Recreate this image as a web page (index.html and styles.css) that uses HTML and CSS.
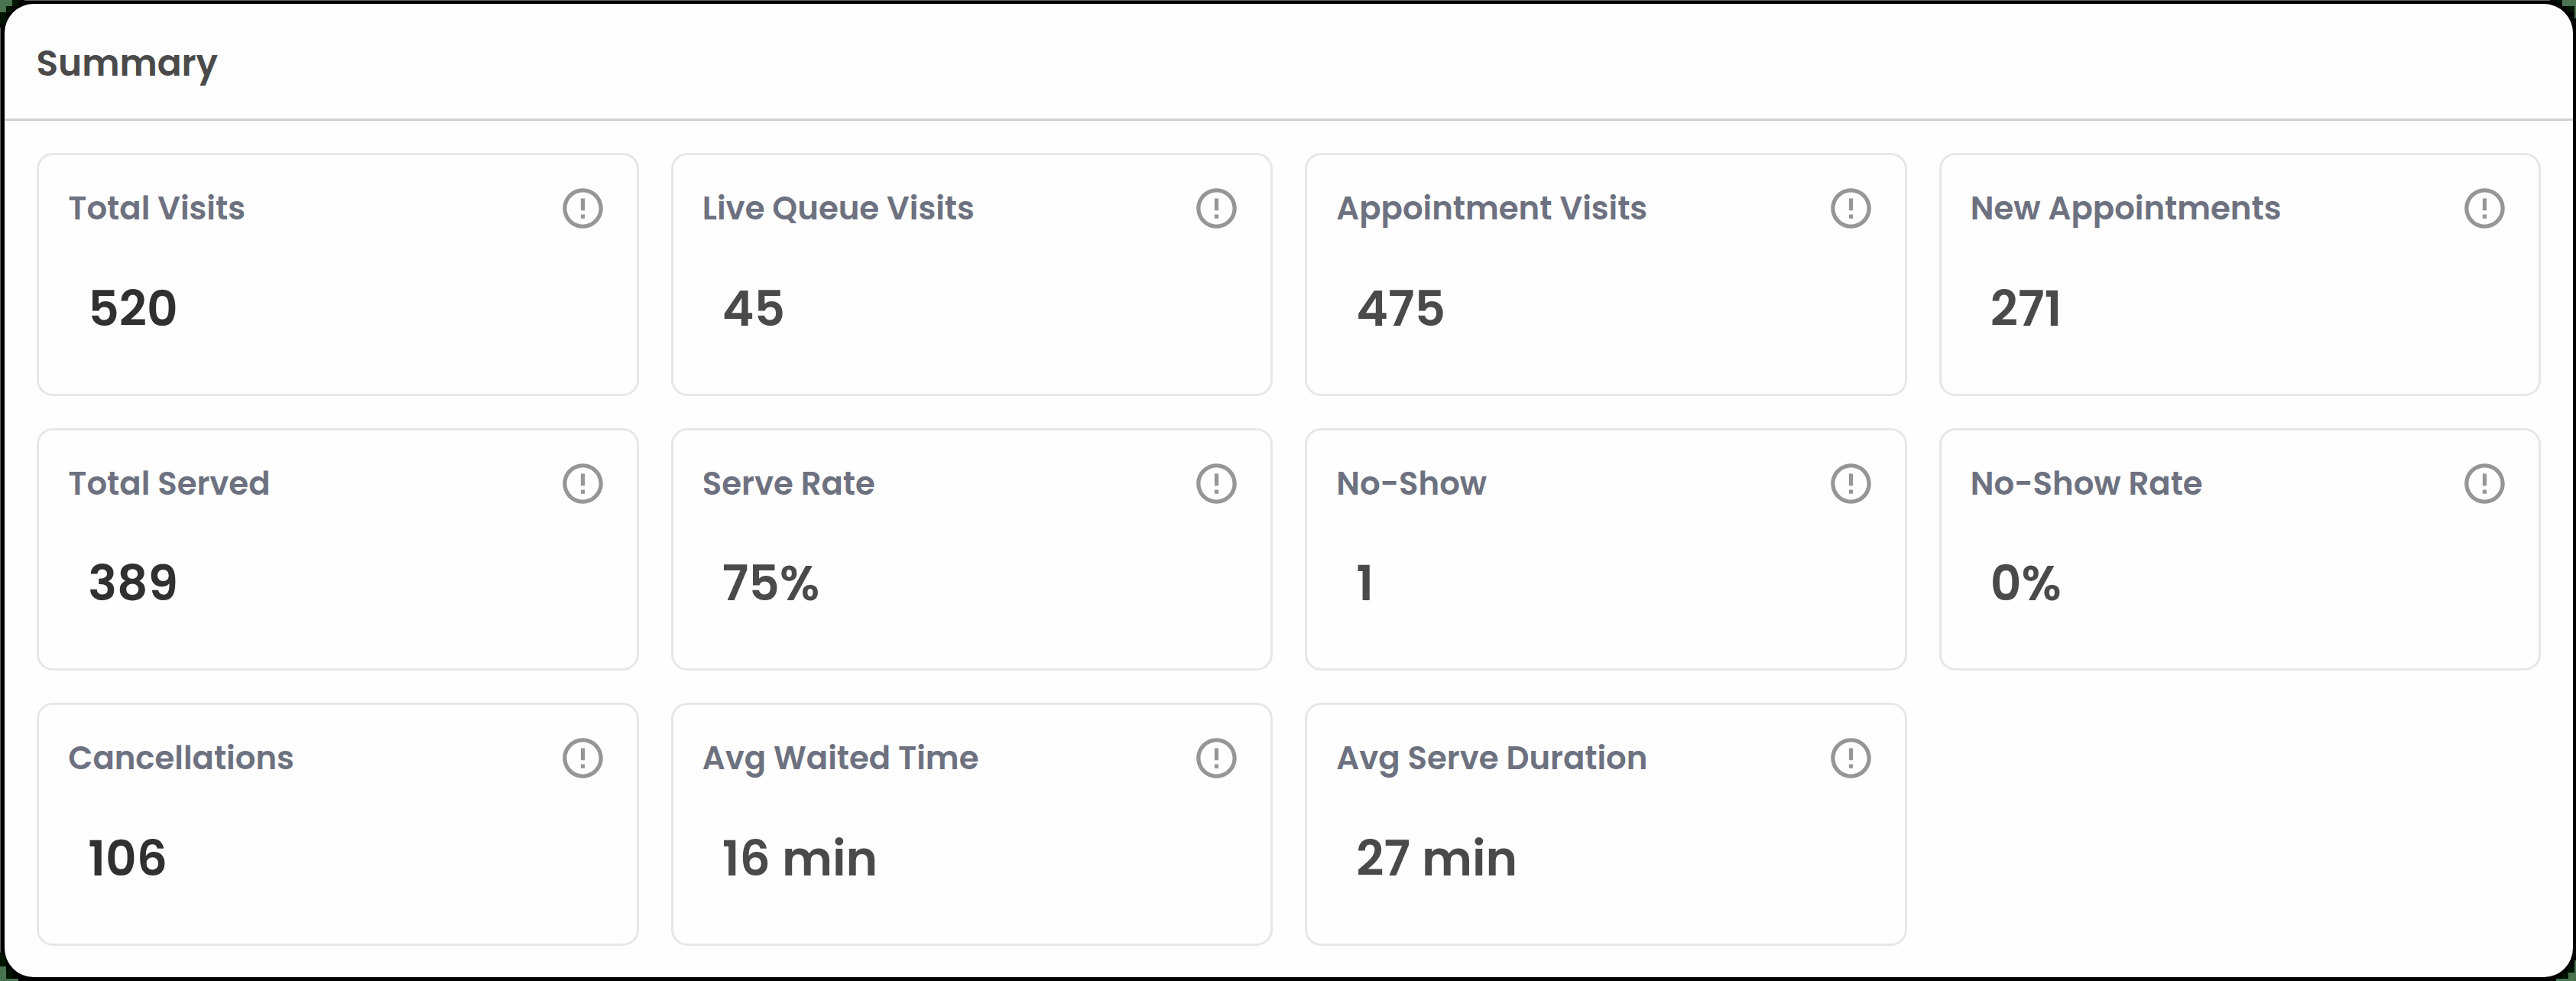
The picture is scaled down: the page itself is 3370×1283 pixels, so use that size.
FILE: index.html
```html
<!DOCTYPE html>
<html lang="en">
<head>
<meta charset="utf-8">
<title>Summary</title>
<link rel="stylesheet" href="styles.css">
</head>
<body>
<svg class="sprite" aria-hidden="true">
  <symbol id="info" viewBox="0 0 24 24"><path d="M11 15h2v2h-2zm0-8h2v6h-2zm.99-5C6.47 2 2 6.48 2 12s4.47 10 9.99 10C17.52 22 22 17.52 22 12S17.52 2 11.99 2zM12 20c-4.42 0-8-3.58-8-8s3.58-8 8-8 8 3.58 8 8-3.58 8-8 8z"/></symbol>
</svg>
<main class="panel">
  <header class="panel-header"><h1 class="heading">Summary</h1></header>
  <section class="grid">
    <article class="card primary"><div class="card-top"><h2 class="title">Total Visits</h2><svg class="icon"><use href="#info"/></svg></div><p class="value">520</p></article>
    <article class="card"><div class="card-top"><h2 class="title">Live Queue Visits</h2><svg class="icon"><use href="#info"/></svg></div><p class="value">45</p></article>
    <article class="card"><div class="card-top"><h2 class="title">Appointment Visits</h2><svg class="icon"><use href="#info"/></svg></div><p class="value">475</p></article>
    <article class="card"><div class="card-top"><h2 class="title">New Appointments</h2><svg class="icon"><use href="#info"/></svg></div><p class="value">271</p></article>
    <article class="card primary"><div class="card-top"><h2 class="title">Total Served</h2><svg class="icon"><use href="#info"/></svg></div><p class="value">389</p></article>
    <article class="card"><div class="card-top"><h2 class="title">Serve Rate</h2><svg class="icon"><use href="#info"/></svg></div><p class="value">75%</p></article>
    <article class="card"><div class="card-top"><h2 class="title">No-Show</h2><svg class="icon"><use href="#info"/></svg></div><p class="value">1</p></article>
    <article class="card"><div class="card-top"><h2 class="title">No-Show Rate</h2><svg class="icon"><use href="#info"/></svg></div><p class="value">0%</p></article>
    <article class="card primary"><div class="card-top"><h2 class="title">Cancellations</h2><svg class="icon"><use href="#info"/></svg></div><p class="value">106</p></article>
    <article class="card"><div class="card-top"><h2 class="title">Avg Waited Time</h2><svg class="icon"><use href="#info"/></svg></div><p class="value">16 min</p></article>
    <article class="card"><div class="card-top"><h2 class="title">Avg Serve Duration</h2><svg class="icon"><use href="#info"/></svg></div><p class="value">27 min</p></article>
  </section>
</main>
</body>
</html>
```
FILE: styles.css
```css
* { box-sizing: border-box; margin: 0; }

/* Black frame with green corner blocks and thin grey outer edges */
body {
  --green: linear-gradient(#4a7350, #4a7350);
  --dark: linear-gradient(#001500, #001500);
  --edge: linear-gradient(#606060, #606060);
  width: 3370px;
  height: 1283px;
  padding: 5px 4px 5px 6px;
  overflow: hidden;
  font-family: Poppins, Inter, sans-serif;
  font-weight: 600;
  background:
    var(--green) 0 0 / 16px 8px,
    var(--green) 0 8px / 8px 8px,
    var(--dark) 0 0 / 24px 8px,
    var(--dark) 0 0 / 8px 32px,
    var(--dark) 8px 8px / 6px 8px,
    var(--green) 3352px 0 / 18px 8px,
    var(--green) 3368px 8px / 2px 16px,
    var(--dark) 3344px 0 / 8px 3px,
    var(--dark) 3358px 8px / 10px 8px,
    var(--green) 0 1264px / 8px 16px,
    var(--green) 0 1280px / 24px 3px,
    var(--dark) 0 1248px / 8px 16px,
    var(--dark) 8px 1268px / 8px 12px,
    var(--green) 3344px 1280px / 26px 3px,
    var(--green) 3360px 1272px / 10px 8px,
    var(--green) 3368px 1256px / 2px 16px,
    var(--dark) 3352px 1272px / 8px 8px,
    var(--dark) 3360px 1264px / 8px 8px,
    var(--edge) 32px 0 / 3304px 1px,
    var(--edge) 0 36px / 1px 1210px,
    #000;
  background-repeat: no-repeat;
}

.sprite { display: none; }

.panel {
  height: 1273px;
  border-radius: 38px;
  background: #fefefe;
  overflow: hidden;
}

.panel-header {
  height: 153px;
  padding: 6px 41.5px 0;
  display: flex;
  align-items: center;
  border-bottom: 3px solid #d0d0d0;
}

.heading {
  font-size: 47px;
  font-weight: 600;
  line-height: 70px;
  color: #4a4a4a;
}

.grid {
  display: grid;
  grid-template-columns: repeat(4, 1fr);
  grid-auto-rows: 317.6px;
  gap: 42px;
  padding: 42px 42px 0;
}

.card {
  padding: 38px 38.6px 0 38.3px;
  border: 3px solid #e7e7e7;
  border-radius: 21px;
}

.card-top {
  display: flex;
  justify-content: space-between;
  align-items: flex-start;
}

.title {
  font-size: 41.8px;
  font-weight: 600;
  line-height: 63px;
  color: #6d7180;
  white-space: nowrap;
}

.icon { width: 63px; height: 63px; fill: #969696; }

.value {
  margin: 52.7px 0 0 26px;
  font-size: 63px;
  line-height: 95px;
  color: #4a4a4a;
}

.primary .value { color: #303030; }
```
